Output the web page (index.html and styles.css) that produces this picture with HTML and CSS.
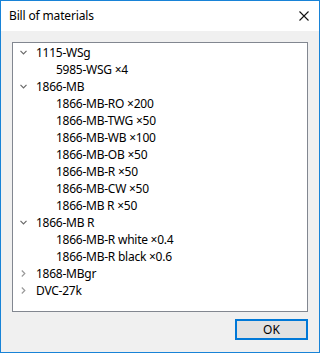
FILE: index.html
```html
<!DOCTYPE html>
<html lang="en">
<head>
    <meta charset="UTF-8">
    <title>Bill of materials</title>
    <link rel="stylesheet" href="styles.css">
</head>
<body>
    <div class="window">
        <div class="titlebar">
            <span class="title">Bill of materials</span>
            <span class="close">
                <svg width="10" height="10" viewBox="0 0 10 10"><path d="M0.5 0.5 L9.5 9.5 M9.5 0.5 L0.5 9.5" stroke="#111" stroke-width="1.1" fill="none"/></svg>
            </span>
        </div>
        <div class="content">
            <div class="tree">
                <div class="row"><span class="twisty"><svg width="7" height="5" viewBox="0 0 7 5"><polyline points="0.5,0.8 3.5,3.8 6.5,0.8" stroke="#6a6a6a" stroke-width="1.2" fill="none"/></svg></span>1115-WSg</div>
                <div class="row child">5985-WSG ×4</div>
                <div class="row"><span class="twisty"><svg width="7" height="5" viewBox="0 0 7 5"><polyline points="0.5,0.8 3.5,3.8 6.5,0.8" stroke="#6a6a6a" stroke-width="1.2" fill="none"/></svg></span>1866-MB</div>
                <div class="row child">1866-MB-RO ×200</div>
                <div class="row child">1866-MB-TWG ×50</div>
                <div class="row child">1866-MB-WB ×100</div>
                <div class="row child">1866-MB-OB ×50</div>
                <div class="row child">1866-MB-R ×50</div>
                <div class="row child">1866-MB-CW ×50</div>
                <div class="row child">1866-MB R ×50</div>
                <div class="row"><span class="twisty"><svg width="7" height="5" viewBox="0 0 7 5"><polyline points="0.5,0.8 3.5,3.8 6.5,0.8" stroke="#6a6a6a" stroke-width="1.2" fill="none"/></svg></span>1866-MB R</div>
                <div class="row child">1866-MB-R white ×0.4</div>
                <div class="row child">1866-MB-R black ×0.6</div>
                <div class="row"><span class="twisty closed"><svg width="5" height="7" viewBox="0 0 5 7"><polyline points="0.8,0.5 3.8,3.5 0.8,6.5" stroke="#9a9a9a" stroke-width="1.2" fill="none"/></svg></span>1868-MBgr</div>
                <div class="row"><span class="twisty closed"><svg width="5" height="7" viewBox="0 0 5 7"><polyline points="0.8,0.5 3.8,3.5 0.8,6.5" stroke="#9a9a9a" stroke-width="1.2" fill="none"/></svg></span>DVC-27k</div>
            </div>
            <div class="actions">
                <button class="ok">OK</button>
            </div>
        </div>
    </div>
</body>
</html>
```
FILE: styles.css
```css
body {
    margin: 0;
    font-family: "Noto Sans", "Open Sans", sans-serif;
    font-size: 12px;
    color: #000;
}
.window {
    box-sizing: border-box;
    width: 320px;
    height: 353px;
    border: 1px solid #1883d7;
    background: #f0f0f0;
    display: flex;
    flex-direction: column;
}
.titlebar {
    height: 30px;
    background: #fff;
    display: flex;
    align-items: center;
    justify-content: space-between;
    padding: 0 10px 0 8px;
}
.title { padding-bottom: 1px; letter-spacing: -0.15px; }
.close { display: flex; }
.content {
    padding: 11px 11px 0 11px;
}
.tree {
    box-sizing: border-box;
    height: 270px;
    border: 1px solid #828790;
    background: #fff;
    padding-top: 1px;
}
.row {
    height: 17px;
    line-height: 17px;
    display: flex;
    align-items: center;
    white-space: nowrap;
    letter-spacing: -0.25px;
}
.row.child { padding-left: 43px; }
.twisty {
    width: 23px;
    display: flex;
    padding-left: 7px;
    box-sizing: border-box;
}
.twisty.closed { padding-left: 8px; }
.actions {
    display: flex;
    justify-content: flex-end;
    margin-top: 7px;
}
.ok {
    box-sizing: border-box;
    width: 73px;
    height: 21px;
    margin: 0;
    border: 2px solid #0078d7;
    background: #e1e1e1;
    font-family: inherit;
    font-size: 12px;
    color: #000;
    padding: 0;
}
```
